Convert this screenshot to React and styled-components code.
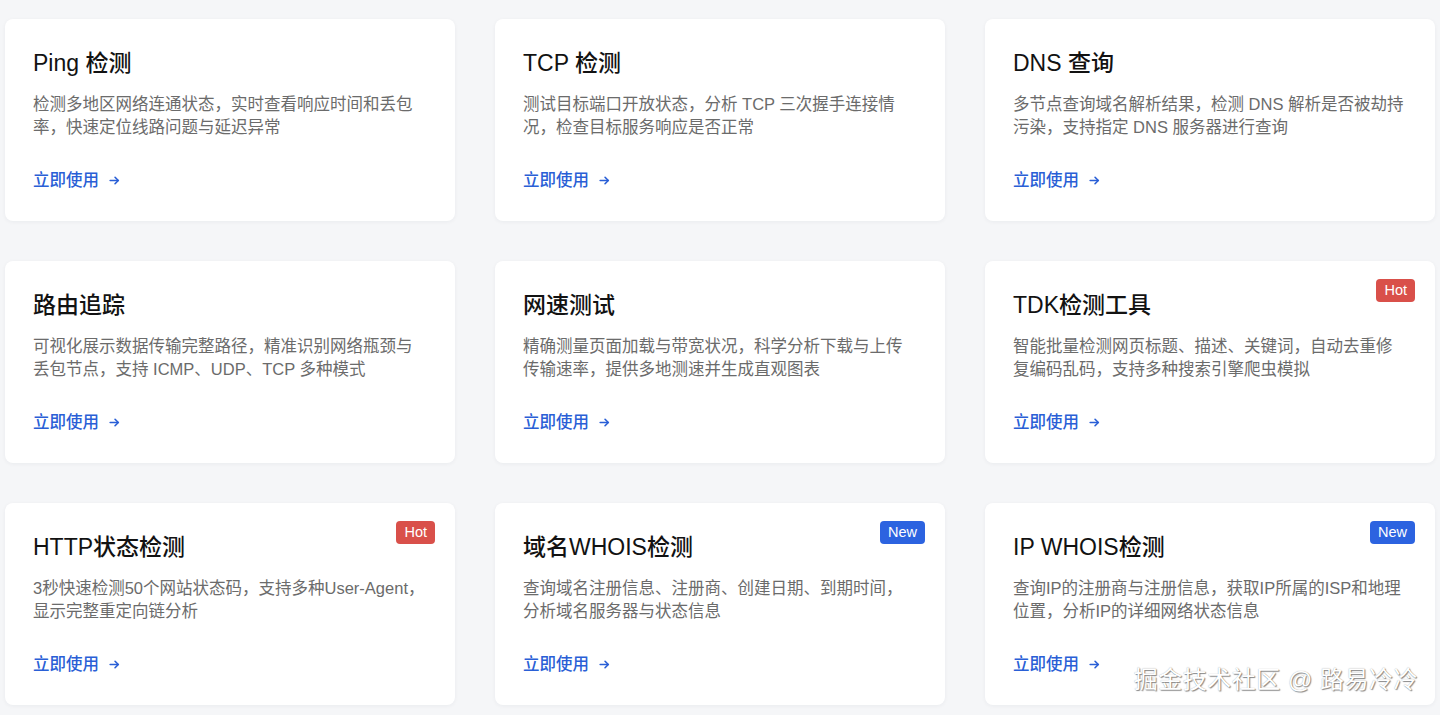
import React from 'react';
import styled, { createGlobalStyle } from 'styled-components';

const GlobalStyle = createGlobalStyle`
  html, body {
    margin: 0;
    padding: 0;
    background: #f5f6f8;
  }
  body {
    font-family: "Liberation Sans", "Noto Sans CJK SC", sans-serif;
    -webkit-font-smoothing: antialiased;
  }
`;

const Page = styled.div`
  position: relative;
  width: 1440px;
  height: 715px;
  overflow: hidden;
  padding: 19px 5px 0;
  box-sizing: border-box;
`;

const Grid = styled.div`
  display: grid;
  grid-template-columns: repeat(3, 450px);
  grid-auto-rows: 202px;
  gap: 40px;
`;

const Card = styled.div`
  position: relative;
  display: flex;
  flex-direction: column;
  align-items: flex-start;
  background: #fff;
  border-radius: 8px;
  box-shadow: 0 1px 4px rgba(20, 30, 50, 0.05);
  padding: 30px 28px 29px;
  box-sizing: border-box;
`;

const Title = styled.h3`
  margin: 0;
  font-size: 23px;
  line-height: 29px;
  font-weight: 500;
  color: #121212;
`;

const Desc = styled.p`
  margin: 15px 0 0;
  font-size: 16.5px;
  line-height: 23px;
  color: #6b6b6b;
`;

const UseLink = styled.a`
  margin-top: auto;
  display: inline-flex;
  align-items: center;
  gap: 9px;
  font-size: 16.5px;
  line-height: 24px;
  font-weight: 500;
  color: #2a5fd6;
  text-decoration: none;
  cursor: pointer;
`;

const Badge = styled.span`
  position: absolute;
  top: 18px;
  right: 20px;
  padding: 0 8px;
  height: 23px;
  line-height: 23px;
  border-radius: 4px;
  font-size: 14.5px;
  color: #fff;
  background: ${(p) => (p.$kind === 'hot' ? '#d9504a' : '#2c63e0')};
`;

const Watermark = styled.div`
  position: absolute;
  right: 22px;
  bottom: 20px;
  font-size: 24px;
  color: #fff;
  letter-spacing: 0.5px;
  text-shadow: 1px 1px 1px rgba(0, 0, 0, 0.45), 0 0 1px rgba(0, 0, 0, 0.35);
  pointer-events: none;
`;

const Arrow = () => (
  <svg width="13" height="13" viewBox="0 0 24 24" fill="none" stroke="currentColor" strokeWidth="3" strokeLinecap="round" strokeLinejoin="round">
    <path d="M4 12h15" />
    <path d="M13 6l6 6-6 6" />
  </svg>
);

const tools = [
  { title: 'Ping 检测', desc: '检测多地区网络连通状态，实时查看响应时间和丢包率，快速定位线路问题与延迟异常' },
  { title: 'TCP 检测', desc: '测试目标端口开放状态，分析 TCP 三次握手连接情况，检查目标服务响应是否正常' },
  { title: 'DNS 查询', desc: '多节点查询域名解析结果，检测 DNS 解析是否被劫持污染，支持指定 DNS 服务器进行查询' },
  { title: '路由追踪', desc: '可视化展示数据传输完整路径，精准识别网络瓶颈与丢包节点，支持 ICMP、UDP、TCP 多种模式' },
  { title: '网速测试', desc: '精确测量页面加载与带宽状况，科学分析下载与上传传输速率，提供多地测速并生成直观图表' },
  { title: 'TDK检测工具', desc: '智能批量检测网页标题、描述、关键词，自动去重修复编码乱码，支持多种搜索引擎爬虫模拟', badge: 'hot' },
  { title: 'HTTP状态检测', desc: '3秒快速检测50个网站状态码，支持多种User-Agent，显示完整重定向链分析', badge: 'hot' },
  { title: '域名WHOIS检测', desc: '查询域名注册信息、注册商、创建日期、到期时间，分析域名服务器与状态信息', badge: 'new' },
  { title: 'IP WHOIS检测', desc: '查询IP的注册商与注册信息，获取IP所属的ISP和地理位置，分析IP的详细网络状态信息', badge: 'new' },
];

export default function App() {
  return (
    <>
      <GlobalStyle />
      <Page>
        <Grid>
          {tools.map((t) => (
            <Card key={t.title}>
              {t.badge && <Badge $kind={t.badge}>{t.badge === 'hot' ? 'Hot' : 'New'}</Badge>}
              <Title>{t.title}</Title>
              <Desc>{t.desc}</Desc>
              <UseLink>
                立即使用
                <Arrow />
              </UseLink>
            </Card>
          ))}
        </Grid>
        <Watermark>掘金技术社区 @ 路易冷冷</Watermark>
      </Page>
    </>
  );
}
